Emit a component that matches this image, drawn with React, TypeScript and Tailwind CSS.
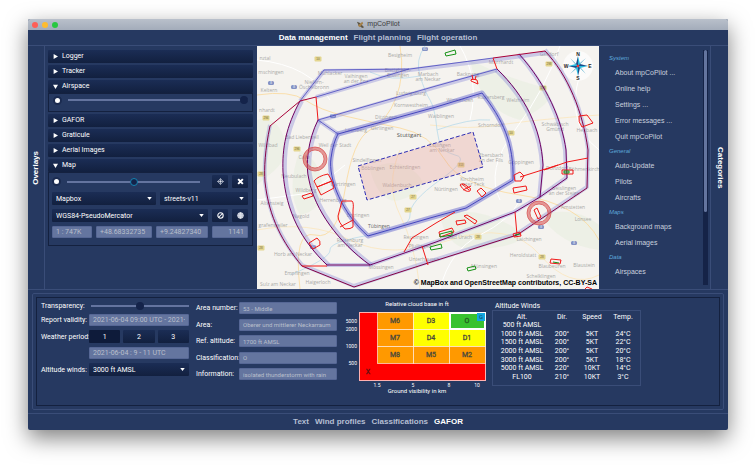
import React from "react";

const ui = "font-['Roboto','Liberation_Sans',sans-serif]";
const dark = "bg-linear-to-b from-[#1b2d55] to-[#12203f] rounded-[1px] text-white";

function Slider({ label, value, active = false }: { label: string; value: number; active?: boolean }) {
  return (
    <input
      type="range"
      aria-label={label}
      defaultValue={value}
      className={
        "block h-2 min-w-0 flex-1 appearance-none bg-transparent [&::-webkit-slider-runnable-track]:h-[2px] [&::-webkit-slider-runnable-track]:bg-[#64749f] [&::-webkit-slider-thumb]:-mt-[3px] [&::-webkit-slider-thumb]:size-2 [&::-webkit-slider-thumb]:appearance-none [&::-webkit-slider-thumb]:rounded-full [&::-webkit-slider-thumb]:bg-[#14234a] " +
        (active ? "[&::-webkit-slider-thumb]:border [&::-webkit-slider-thumb]:border-[#1583b0]" : "")
      }
    />
  );
}

function Dot({ label }: { label: string }) {
  return (
    <input
      type="checkbox"
      defaultChecked
      aria-label={label}
      className="size-[9px] shrink-0 appearance-none rounded-full border-2 border-[#1b2b50] bg-white"
    />
  );
}

function Select({ label, value, className }: { label: string; value: string; className: string }) {
  return (
    <div className={"relative h-[13px] " + className}>
      <select aria-label={label} className={dark + " block h-full w-full appearance-none pl-1 text-[7px] leading-[12px]"}>
        <option>{value}</option>
      </select>
      <svg viewBox="0 0 6 4" className="pointer-events-none absolute top-[5px] right-1 h-[3px] w-[5px]">
        <path d="M0 0H6L3 4Z" fill="#fff" />
      </svg>
    </div>
  );
}

function Field({ value, className, id, size = "text-[7px]" }: { value: string; className: string; id: string; size?: string }) {
  return (
    <input
      id={id}
      aria-label={id}
      readOnly
      defaultValue={value}
      className={"block h-3 min-w-0 rounded-[1px] border border-[#566795] bg-[#64759f] px-[3px] leading-[10px] text-[#b9bfcb] " + size + " " + className}
    />
  );
}

function Section({ title, open = false, children }: { title: string; open?: boolean; children?: React.ReactNode }) {
  return (
    <section>
      <button aria-expanded={open} className={dark + " flex h-[13px] w-full items-center gap-1 pl-[5px] text-[7px]"}>
        <svg viewBox="0 0 8 8" className="size-[5px]">
          <path d={open ? "M0 1H8L4 8Z" : "M1 0V8L8 4Z"} fill="#fff" />
        </svg>
        {title}
      </button>
      {children}
    </section>
  );
}

function IconButton({ label, children }: { label: string; children: React.ReactNode }) {
  return (
    <button aria-label={label} className={dark + " flex h-[13px] w-4 shrink-0 items-center justify-center"}>
      <svg viewBox="0 0 12 12" className="size-[7px]" fill="none" stroke="#fff">
        {children}
      </svg>
    </button>
  );
}

function Overlays() {
  return (
    <div className={ui + " flex w-[213px] shrink-0 flex-col gap-[2px] border-l border-[#3a4d78] px-1 pt-1 pl-[3px]"}>
      <Section title="Logger" />
      <Section title="Tracker" />
      <Section title="Airspace" open>
        <div className="flex h-[19px] items-start gap-[6px] border border-[#14213f] px-1 pt-[2px]">
          <Dot label="Show airspace" />
          <Slider label="Airspace opacity" value={100} />
        </div>
      </Section>
      <Section title="GAFOR" />
      <Section title="Graticule" />
      <Section title="Aerial Images" />
      <Section title="Map" open>
        <div className="flex h-[74px] flex-col gap-1 border border-[#14213f] pt-[2px] pr-1 pl-[3px]">
          <div className="flex items-center gap-1">
            <Dot label="Show map" />
            <div className="flex flex-1 px-[2px] pr-2">
              <Slider label="Map opacity" value={50} active />
            </div>
            <IconButton label="Centre map">
              <path d="M6 1L11 6L6 11L1 6Z" strokeWidth="1.2" stroke="#c3cadb" />
              <circle cx="6" cy="6" r="2" fill="#dfe4ee" strokeWidth="0" />
              <path d="M6 1V4M6 8V11M1 6H4M8 6H11" strokeWidth="1" />
            </IconButton>
            <IconButton label="Reset map">
              <path d="M2 2L10 10M10 2L2 10" strokeWidth="3.4" />
            </IconButton>
          </div>
          <div className="flex gap-1">
            <Select label="Provider" value="Mapbox" className="w-[104px]" />
            <Select label="Style" value="streets-v11" className="flex-1" />
          </div>
          <div className="flex gap-1">
            <Select label="Projection" value="WGS84-PseudoMercator" className="flex-1" />
            <IconButton label="No rotation">
              <circle cx="6" cy="6" r="4.6" strokeWidth="1.8" />
              <path d="M3 9L9 3" strokeWidth="1.8" />
            </IconButton>
            <IconButton label="World">
              <circle cx="6" cy="6" r="5" strokeWidth="1" fill="#9fa9c0" />
              <path d="M1 6H11M6 1V11M2 3.5H10M2 8.5H10M6 1Q1.5 6 6 11Q10.500 6 6 1" strokeWidth=".7" />
            </IconButton>
          </div>
          <div className="flex gap-1">
            <Field id="Scale" value="1 : 747K" className="w-10" />
            <Field id="Latitude" value="+48.68332735" className="w-14" />
            <Field id="Longitude" value="+9.24827340" className="flex-1" />
            <Field id="Elevation" value="1141" className="w-9 text-right" />
          </div>
        </div>
      </Section>
    </div>
  );
}

const places: [number, number, string][] = [
  [265, 60, "nztal"], [271, 74, "mschingen"], [269, 92, "Keltern"], [267, 112, "nhardt"], [268, 147, "Wildbad"],
  [330, 75, "Mühlacker"], [314, 84, "Niefern-"], [314, 89, "Öschelbronn"], [356, 78, "Vaihingen"], [356, 83, "an der Enz"],
  [400, 57, "Besigheim"], [398, 72, "Bietigheim-"], [398, 77, "Bissingen"], [428, 76, "Marbach"], [428, 81, "am Neckar"],
  [411, 95, "Ludwigsburg"], [411, 107, "Kornwestheim"], [386, 119, "Ditzingen"], [382, 130, "Gerlingen"], [356, 132, "Leonberg"],
  [302, 139, "Bad Liebenzell"], [335, 147, "Weil der Stadt"], [304, 159, "Calw"], [367, 162, "Sindelfingen"], [373, 170, "Böblingen"],
  [405, 169, "Echterdingen"], [397, 187, "Waldenbuch"], [294, 178, "Neubulach"], [306, 192, "Wildberg"], [343, 186, "Gärtringen"],
  [333, 202, "Herrenberg"], [272, 205, "Altensteig"], [301, 218, "Nagold"], [273, 227, "grafenweiler"], [358, 217, "Entringen"],
  [350, 242, "Rottenburg"], [350, 247, "am Neckar"], [293, 256, "Horb am Neckar"], [297, 275, "Empfingen"], [278, 286, "Sulz am Neckar"],
  [318, 284, "Haigerloch"], [381, 269, "Mössingen"], [416, 239, "Reutlingen"], [420, 248, "Pfullingen"],
  [424, 261, "Unterhausen"], [468, 76, "Backnang"], [501, 64, "Murrhardt"], [549, 56, "Gaildorf"], [491, 99, "Rudersberg"],
  [518, 102, "Welzheim"], [460, 102, "Winnenden"], [441, 118, "Waiblingen"], [491, 127, "Schorndorf"], [555, 126, "Schwäbisch"],
  [555, 131, "Gmünd"], [587, 132, "Heubach"], [440, 147, "Esslingen"], [442, 152, "am Neckar"], [491, 157, "Ebersbach"],
  [491, 162, "an der Fils"], [521, 164, "Göppingen"], [472, 181, "Kirchheim"], [472, 186, "unter Teck"], [446, 191, "Nürtingen"],
  [557, 170, "Donzdorf"], [584, 171, "Böhmenkirch"], [564, 190, "Geislingen"], [564, 195, "an der Steige"], [573, 209, "Amstetten"],
  [583, 221, "Lonsee"], [529, 241, "Laichingen"], [460, 239, "Bad Urach"], [523, 257, "Heroldstatt"], [484, 268, "Münsingen"],
  [552, 268, "Blaubeuren"], [584, 267, "Blaustein"], [541, 278, "Schelklingen"],
];

const roads: [number, number, string][] = [
  [271, 83, "8"], [294, 87, "8"], [425, 49, "81"], [333, 116, "81"], [519, 201, "8"], [541, 227, "8"], [574, 243, "8"], [313, 247, "81"],
];
const roadsB: [number, number, string][] = [
  [318, 59, "10"], [266, 118, "294"], [297, 149, "296"], [413, 197, "27"], [408, 210, "27"], [461, 165, "313"], [478, 237, "28"],
  [542, 257, "28"], [549, 64, "298"], [543, 88, "298"], [511, 133, "10"], [261, 174, "28"], [261, 248, "28"],
];

const ringLeft2 = "M300 101C286 127 282 148 283 172C286 213 302 241 327 265";
const ringLeft3 = "M318 120C308 140 305 165 309 180C315 210 338 242 370 265";
const outer = "M270 126C265 150 264 168 265 182C269 218 283 243 302 266L354 287L428 263L517 235L587 188L588 150C583 112 568 75 545 51";
const right2 = "M519 54C547 85 562 121 566 150L567 178L540 197L515 212L436 242L370 265L327 265";
const right3 = "M497 69C525 96 541 128 543 165L540 197";
const inner = "M338 134L436 107L482 93C503 120 514 143 513 180L466 208L430 218L368 236C342 213 328 179 331 158Q333 143 338 134Z";

function Compass() {
  return (
    <g transform="translate(578 66)">
      <circle r="15" fill="#fff" opacity=".65" />
      <g fill="#1591bd">
        <path d="M0 0L-8 -8L-2 -1ZM0 0L8 -8L1 -2ZM0 0L8 8L2 1ZM0 0L-8 8L-1 2Z" />
        <path d="M0 -10L2 -2L0 0ZM10 0L2 2L0 0ZM0 10L-2 2L0 0ZM-10 0L-2 -2L0 0Z" fill="#28b9dc" />
        <path d="M0 -10L-2 -2L0 0ZM10 0L2 -2L0 0ZM0 10L2 2L0 0ZM-10 0L-2 2L0 0Z" fill="#174e8c" />
      </g>
      <circle r="1.300" fill="#e33" />
      <g fontSize="5" fontWeight="700" textAnchor="middle" fill="#222">
        <text y="-10">N</text><text y="14">S</text><text x="12" y="2">E</text><text x="-12" y="2">W</text>
      </g>
    </g>
  );
}

function MapView() {
  return (
    <div className="relative min-w-0 flex-1 bg-[#f5f3ef]">
      <svg viewBox="257 46 342 243" preserveAspectRatio="xMidYMid slice" className="block h-full w-full" fill="none">
        <g fill="#e8efe0" opacity=".6">
          <path d="M257 120Q275 115 283 135T275 170L257 185ZM300 150Q320 160 322 185T300 215Q285 190 300 150ZM370 170Q395 155 415 172T400 200Q380 205 370 170ZM470 60Q500 75 535 85T520 120Q480 110 470 60ZM440 215Q475 205 510 225T470 250Q445 245 440 215ZM540 215Q575 205 599 225V250Q560 245 540 215Z" />
        </g>
        <g stroke="#fbd99a" strokeWidth=".8">
          <path d="M257 95Q290 90 305 100T345 116T400 128T445 160T520 195T599 240" />
          <path d="M400 46Q405 75 396 98T370 130T345 190T315 235T300 289" />
          <path d="M430 125Q470 130 500 125T599 115M400 150Q385 185 400 215T420 289M257 230Q310 220 350 240T450 240T540 255T599 275" stroke="#fbe6bd" />
          <path d="M257 60Q310 65 330 100M560 46Q545 90 515 130T500 200M460 46Q480 80 470 120M257 200L310 193L345 165M585 60Q560 120 599 150M440 289Q450 250 480 235T520 200" stroke="#ffffff" strokeWidth="1" />
        </g>
        <path d="M425 46Q415 60 420 76T430 100T437 130T455 155T440 180T410 215T370 235T330 250T290 275M420 76Q390 82 370 72M437 130Q470 118 490 120" stroke="#b9dbea" strokeWidth=".8" />
        <g fontSize="5" textAnchor="middle" fill="#aaaaa8" className="font-['Open_Sans','Noto_Sans',sans-serif]">
          {places.map(([x, y, name]) => (
            <text key={name + y} x={x} y={y}>{name}</text>
          ))}
          <text x="409" y="137" fontSize="6" fill="#555">Stuttgart</text>
          <text x="379" y="228" fontSize="5" fill="#666">Tübingen</text>
        </g>
        <g fontSize="3" textAnchor="middle" fill="#fff" className="font-['Liberation_Sans',sans-serif]">
          {roads.map(([x, y, n]) => (
            <g key={x + n}><rect x={x - 3} y={y - 2} width="6" height="4" rx="1.500" fill="#8593c5" /><text x={x} y={y + 1}>{n}</text></g>
          ))}
          {roadsB.map(([x, y, n]) => (
            <g key={x + n} fill="#6d653a"><rect x={x - 3.500} y={y - 2.500} width="7" height="5" rx="1" fill="#e4d68f" /><text x={x} y={y + 1}>{n}</text></g>
          ))}
        </g>

        <path d="M358 166L473 132L483 167L367 200Z" fill="#e79a96" fillOpacity=".32" stroke="#2c2cb4" strokeWidth="1" strokeDasharray="4 2" />
        <g stroke="#6a6ad0" strokeOpacity=".3" strokeWidth="4" strokeLinejoin="round">
          <path d={outer} transform="translate(0 -1)" />
          <path d={ringLeft2} transform="translate(2 0)" />
          <path d={ringLeft3} transform="translate(2 0)" />
          <path d={right2} transform="translate(-1 0)" />
          <path d={right3} transform="translate(-1 1)" />
          <path d="M300 101L324 71L410 70L493 60L545 53M316 97L409 70M318 121L436 87L497 70M318 120L338 134" />
          <path d={inner} strokeWidth="5" strokeOpacity=".5" />
        </g>
        <g stroke="#4646be" strokeWidth=".8">
          <path d="M300 101L324 70L410 69L493 58M316 97L409 69M318 120L436 86L497 69M318 120L338 134" />
          <path d={inner} strokeWidth="1" />
        </g>
        <g stroke="#850044" strokeWidth="1">
          <path d={outer} />
          <path d={ringLeft2} stroke="#700060" />
          <path d={ringLeft3} stroke="#700060" />
          <path d={right2} stroke="#700060" />
          <path d={right3} stroke="#700060" />
          <path d="M270 126L300 101L316 97M493 58L545 51" stroke="#a80038" />
        </g>
        <g stroke="#f01818" strokeWidth="1">
          <path d="M316 97L318 120M493 58L497 69M302 266H327M544 170L567 162L588 158M520 177L558 165M404 252L412 238L436 223L455 212M515 212L517 235M422 246L428 265" />
          <path d="M314 181Q318 176 328 174L332 181L317 187ZM317 187L332 181L334 188L321 195ZM302 196L311 193L313 196L304 199ZM342 201H352Q354 203 353 210V227Q351 229 345 229Q338 222 338 216ZM340 227L353 220M309 243L317 238Q321 241 320 245L313 249Z" />
          <path d="M471 81L478 84L477 80Q470 78 471 81ZM473 80L472 75M475 80L476 76M579 116L587 115L593 123L582 127Q578 122 579 116Z" />
          <path d="M460 185Q463 182 468 187Q472 188 470 191Q465 193 460 185ZM462 184L469 190M463 190L471 186M477 191L481 188L486 193L482 197ZM514 175L520 172L524 176L521 181L515 181ZM513 188L526 186L527 190L514 193ZM456 221L465 220L466 223L457 225ZM464 216L467 215L477 221L475 224ZM439 232L452 228L454 232L440 237ZM534 210L537 208L541 217L538 219ZM562 170H573V174H562ZM513 234L520 232L521 236L514 237ZM551 259L561 260L560 264L550 263ZM585 289L587 287L592 289" />
        </g>
        <g stroke="#169116" strokeWidth="1">
          <path d="M445 53L455 50L456 54L446 56ZM440 234L452 231V235L440 237ZM430 247L441 244L442 248L431 250ZM467 268L475 266L476 269L468 271ZM564 171H569V173H564ZM515 235L520 234M553 262L559 263" />
        </g>
        {[[315, 159], [539, 213]].map(([x, y]) => (
          <g key={x} stroke="#d54a4a">
            <circle cx={x} cy={y} r="10.500" strokeWidth="2.800" strokeOpacity=".55" />
            <circle cx={x} cy={y} r="12" strokeWidth=".7" />
            <circle cx={x} cy={y} r="9" strokeWidth=".7" />
          </g>
        ))}
        <g className="font-['Liberation_Sans',Arial,sans-serif]"><Compass /></g>
      </svg>
      <p className="absolute right-[2px] bottom-[2px] text-[7px] leading-[8px] font-bold whitespace-nowrap text-black">
        © MapBox and OpenStreetMap contributors, CC-BY-SA
      </p>
    </div>
  );
}

const menu: [string, string[]][] = [
  ["System", ["About mpCoPilot ...", "Online help", "Settings ...", "Error messages ...", "Quit mpCoPilot"]],
  ["General", ["Auto-Update", "Pilots", "Aircrafts"]],
  ["Maps", ["Background maps", "Aerial images"]],
  ["Data", ["Airspaces", "NOTAMs"]],
];

function Categories() {
  return (
    <div className="flex w-28 shrink-0 justify-between border-r border-[#3a4d78] pt-1 pr-[2px] pb-1">
      <nav className="h-full flex-1 overflow-hidden pt-[2px] pl-[10px]">
        {menu.map(([title, items]) => (
          <section key={title}>
            <h2 className="text-[6px] leading-[13px] text-[#5da8da] italic">{title}</h2>
            {items.map((item) => (
              <a key={item} href="#" className="block pl-[6px] text-[7px] leading-[16px] text-[#c9d0de]">{item}</a>
            ))}
          </section>
        ))}
      </nav>
      <div className="flex h-full w-[5px] justify-center bg-[#152347]">
        <div className="h-[69%] w-[3px] rounded-full bg-[#64759f]" />
      </div>
    </div>
  );
}

const cells: [number, number, string, string][] = [
  [37, 13, "M6", "#ff9900"], [73, 13, "D3", "#ffff00"],
  [37, 30, "M7", "#ff9900"], [73, 30, "D4", "#ffff00"], [109, 30, "D1", "#ffff00"],
  [37, 47, "M8", "#ff9900"], [73, 47, "M5", "#ff9900"], [109, 47, "M2", "#ff9900"],
];

function GaforChart() {
  return (
    <svg viewBox="0 0 147 97" className="h-[97px] w-[147px] shrink-0">
      <g fill="#fff" fontSize="6" textAnchor="middle">
        <text x="77" y="7">Relative cloud base in ft</text>
        <rect x="19.500" y="13.500" width="126" height="68" fill="#ff0000" stroke="#ffb0b0" />
        {cells.map(([x, y, name, color]) => (
          <g key={name}>
            <rect x={x + .5} y={y + .5} width="36" height="17" fill={color} stroke="#fff" strokeOpacity=".6" />
            <text x={x + 18} y={y + 11} fontSize="7" fill="#4a4a3c" stroke="#4a4a3c" strokeWidth=".3">{name}</text>
          </g>
        ))}
        <rect x="110" y="14" width="35" height="16" fill="#39c22f" stroke="#fff" strokeWidth="2" />
        <rect x="137" y="14" width="8" height="8" fill="#12a8e0" />
        <text x="141" y="20" fontSize="6" fill="#1b4a60">G</text>
        <text x="127" y="24" fontSize="7" fill="#245c20" stroke="#245c20" strokeWidth=".3">O</text>
        <text x="28" y="75" fontSize="7" fill="#5c1010" stroke="#5c1010" strokeWidth=".3">X</text>
        <g fontSize="5">
          <text x="37" y="88">1.5</text><text x="73" y="88">5</text><text x="109" y="88">8</text><text x="137" y="88">10</text>
        </g>
        <text x="77" y="94">Ground visibility in km</text>
      </g>
      <g fill="#fff" fontSize="5" textAnchor="end">
        <text x="17" y="24">5000</text><text x="17" y="32">2000</text><text x="17" y="49">1000</text><text x="17" y="66">500</text>
      </g>
    </svg>
  );
}

const winds = [
  ["500 ft AMSL", "", "", ""],
  ["1000 ft AMSL", "200°", "5KT", "24°C"],
  ["1500 ft AMSL", "200°", "5KT", "22°C"],
  ["2000 ft AMSL", "200°", "5KT", "20°C"],
  ["3000 ft AMSL", "200°", "5KT", "18°C"],
  ["5000 ft AMSL", "220°", "10KT", "14°C"],
  ["FL100", "210°", "10KT", "3°C"],
];

const areaInfo = [
  ["Area number:", "53 - Middle"],
  ["Area:", "Oberer und mittlerer Neckarraum"],
  ["Ref. altitude:", "1700 ft AMSL"],
  ["Classification:", "O"],
  ["Information:", "isolated thunderstorm with rain"],
];

function Gafor() {
  return (
    <section className="border-t border-[#3a4d78] px-1 pt-[3px] pb-[3px]">
      <div className="rounded-[2px] border border-[#3a4d78] p-[3px]">
        <div className={ui + " flex h-[109px] border border-[#14213f] pt-1 pl-1 text-[7px] leading-[8px] text-white"}>
          <div className="flex w-[148px] shrink-0 flex-col gap-1">
            <div className="flex h-2 items-center">
              <span className="w-[50px]">Transparency:</span>
              <Slider label="Transparency" value={50} />
            </div>
            <div className="flex h-3 items-center">
              <label htmlFor="Report validity" className="w-12 whitespace-nowrap">Report validity:</label>
              <Field id="Report validity" value="2021-06-04 09:00 UTC - 2021-06-04 15:00 UTC" className="flex-1" />
            </div>
            <div className="flex h-[13px] items-center">
              <span className="w-12 whitespace-nowrap">Weather period:</span>
              <div className="flex flex-1 gap-[3px]">
                <button className="h-[13px] flex-1 rounded-[1px] bg-[#0e1b3a]">1</button>
                <button className={dark + " h-[13px] flex-1"}>2</button>
                <button className={dark + " h-[13px] flex-1"}>3</button>
              </div>
            </div>
            <div className="flex h-3 pl-12">
              <Field id="Period" value="2021-06-04 : 9 - 11 UTC" className="flex-1" />
            </div>
            <div className="flex h-[13px] items-center">
              <span className="w-12 whitespace-nowrap">Altitude winds:</span>
              <Select label="Altitude winds" value="3000 ft AMSL" className="flex-1" />
            </div>
          </div>
          <div className="ml-[7px] flex h-[78px] w-[141px] shrink-0 flex-col justify-between">
            {areaInfo.map(([name, value]) => (
              <div key={name} className="flex items-center">
                <label htmlFor={name} className="w-[43px] whitespace-nowrap">{name}</label>
                <Field id={name} value={value} className="flex-1" size="text-[6px]" />
              </div>
            ))}
          </div>
          <div className="-mt-1 ml-[3px] pt-[1px]"><GaforChart /></div>
          <div className="ml-[5px] w-[149px]">
            <h3 id="winds" className="pl-[3px]">Altitude Winds</h3>
            <div className="border border-[#3a4d78] pt-[2px] pb-1 pl-[3px]">
              <table aria-labelledby="winds" className="h-[68px] border-collapse text-center">
                <thead>
                  <tr>
                    <th className="w-[52px] p-0 font-normal">Alt.</th>
                    <th className="w-7 p-0 font-normal">Dir.</th>
                    <th className="w-8 p-0 font-normal">Speed</th>
                    <th className="w-[30px] p-0 font-normal">Temp.</th>
                  </tr>
                </thead>
                <tbody>
                  {winds.map((row) => (
                    <tr key={row[0]}>
                      {row.map((cell, i) => <td key={i} className="p-0">{cell}</td>)}
                    </tr>
                  ))}
                </tbody>
              </table>
            </div>
          </div>
        </div>
      </div>
    </section>
  );
}

function NavBar({ items, active, className }: { items: string[]; active: string; className: string }) {
  return (
    <nav className={"flex items-center justify-center gap-[6px] text-[8px] font-bold " + className}>
      {items.map((item) => (
        <a key={item} href="#" className={item === active ? "text-white" : "text-[#b5bfd3]"}>{item}</a>
      ))}
    </nav>
  );
}

export default function App() {
  return (
    <div className="min-h-screen overflow-hidden bg-white px-7 pt-[19px] pb-9 font-['Liberation_Sans',Arial,sans-serif]">
      <div className="overflow-hidden rounded-[2px] bg-[#263961] shadow-[0_8px_22px_rgba(0,0,0,0.5)]">
        <header className="relative flex h-[11px] items-center justify-center gap-[2px] bg-linear-to-b from-[#b9c0cb] to-[#a3acba] text-[7px] text-[#3c3c3c]">
          <div className="absolute left-1 flex gap-1">
            <span className="size-[6px] rounded-full bg-[#fe5f57]" />
            <span className="size-[6px] rounded-full bg-[#febc2e]" />
            <span className="size-[6px] rounded-full bg-[#28c840]" />
          </div>
          <svg viewBox="0 0 10 10" className="size-[9px]">
            <path d="M1 2L4 3L9 8L7 9L3 6Z" fill="#5c5546" />
            <path d="M2 6L7 2L8 4L4 8Z" fill="#a5824b" />
          </svg>
          mpCoPilot
        </header>
        <NavBar className="h-[15px]" items={["Data management", "Flight planning", "Flight operation"]} active="Data management" />
        <main>
          <div className="flex h-[244px] border-t border-[#3a4d78]">
            <div className="flex w-4 shrink-0 items-center justify-center">
              <button className="rotate-180 text-[8px] leading-[10px] font-bold text-white [writing-mode:vertical-rl]">Overlays</button>
            </div>
            <Overlays />
            <MapView />
            <Categories />
            <div className="flex w-[17px] shrink-0 items-center justify-center">
              <button className="text-[8px] leading-[10px] font-bold text-white [writing-mode:vertical-rl]">Categories</button>
            </div>
          </div>
          <Gafor />
        </main>
        <NavBar className="h-[17px] border-t border-[#3a4d78]" items={["Text", "Wind profiles", "Classifications", "GAFOR"]} active="GAFOR" />
      </div>
    </div>
  );
}
